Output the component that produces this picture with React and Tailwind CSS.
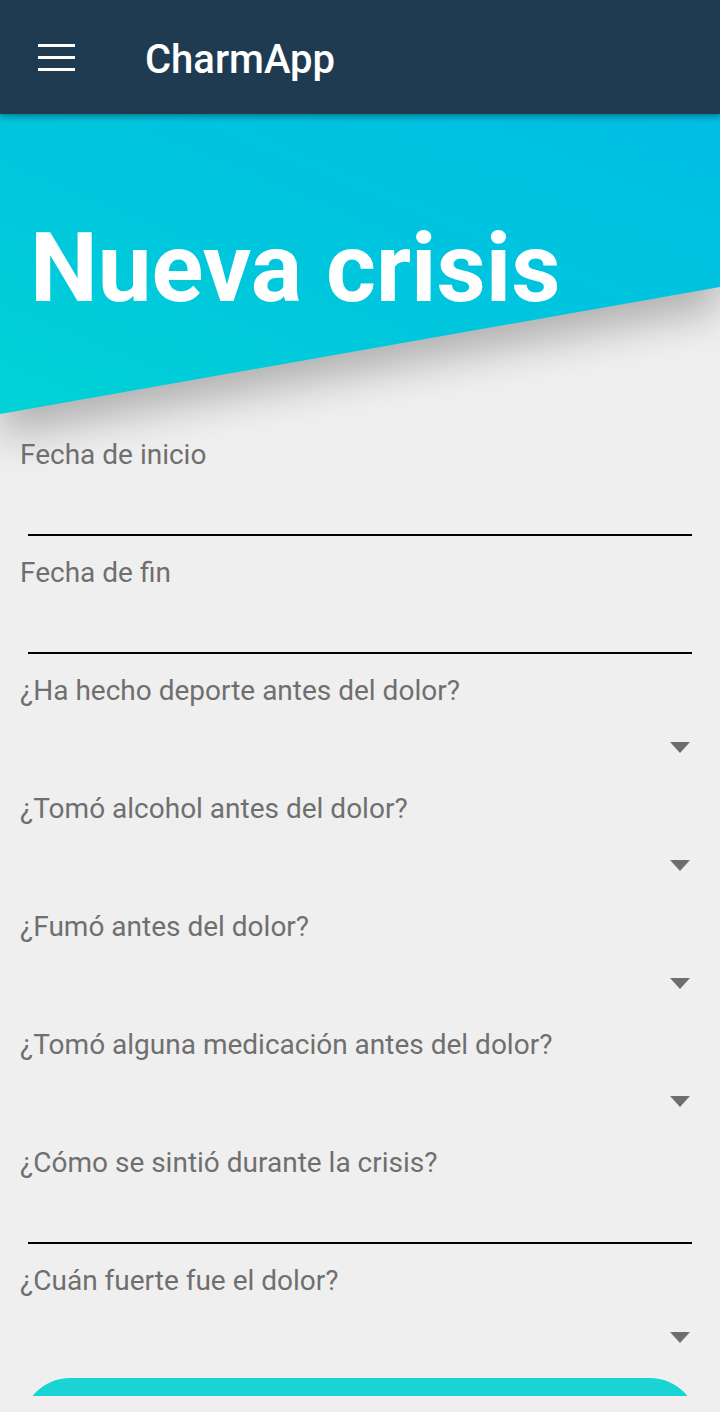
import React from "react";

const font = { fontFamily: "Roboto, 'Noto Sans', 'Liberation Sans', sans-serif" };

function LineField({ label }) {
  return (
    <div className="flex h-[118px] flex-col">
      <div className="h-[34px] pl-[20px] pt-[2px] text-[28px] leading-[32px] text-[#6f6f6f]">{label}</div>
      <div className="mx-[28px] mt-[63px] h-[2px] bg-black" />
    </div>
  );
}

function SelectField({ label }) {
  return (
    <div className="flex h-[118px] flex-col">
      <div className="h-[34px] pl-[20px] pt-[2px] text-[28px] leading-[32px] text-[#6f6f6f]">{label}</div>
      <div className="mt-[35px] flex justify-end pr-[30px]">
        <svg width="20" height="11" viewBox="0 0 20 11">
          <polygon points="0,0 20,0 10,11" fill="#6e6e6e" />
        </svg>
      </div>
    </div>
  );
}

export default function App() {
  return (
    <div className="relative h-[1412px] w-[720px] overflow-hidden bg-[#efefef]" style={font}>
      <div className="h-[1396px] overflow-hidden">
        <header className="relative z-20 flex h-[114px] items-start bg-[#1f3b52] shadow-[0_3px_6px_rgba(0,0,0,0.35)]">
          <div className="ml-[38px] mt-[44px] flex flex-col gap-[9px]">
            <div className="h-[3px] w-[37px] bg-white" />
            <div className="h-[3px] w-[37px] bg-white" />
            <div className="h-[3px] w-[37px] bg-white" />
          </div>
          <div className="ml-[70px] mt-[36px] text-[40px] font-medium leading-[48px] text-white">CharmApp</div>
        </header>

        <div className="relative z-10 h-[300px] drop-shadow-[0_22px_20px_rgba(0,0,0,0.26)]">
          <div className="h-full bg-[linear-gradient(to_top_right,#00d2d6_0%,#00c6dd_45%,#00bee4_100%)] pt-[106px] [clip-path:polygon(0_0,100%_0,100%_173px,0_100%)]">
            <h1 className="pl-[30px] text-[96px] font-bold leading-[96px] text-white">Nueva crisis</h1>
          </div>
        </div>

        <div className="relative z-20 pt-[23px]">
          <LineField label="Fecha de inicio" />
          <LineField label="Fecha de fin" />
          <SelectField label="¿Ha hecho deporte antes del dolor?" />
          <SelectField label="¿Tomó alcohol antes del dolor?" />
          <SelectField label="¿Fumó antes del dolor?" />
          <SelectField label="¿Tomó alguna medicación antes del dolor?" />
          <LineField label="¿Cómo se sintió durante la crisis?" />
          <SelectField label="¿Cuán fuerte fue el dolor?" />
          <div className="-mt-[3px] px-[22px]">
            <div className="h-[96px] w-full rounded-[48px] bg-[#19d3d5]" />
          </div>
        </div>
      </div>
    </div>
  );
}
